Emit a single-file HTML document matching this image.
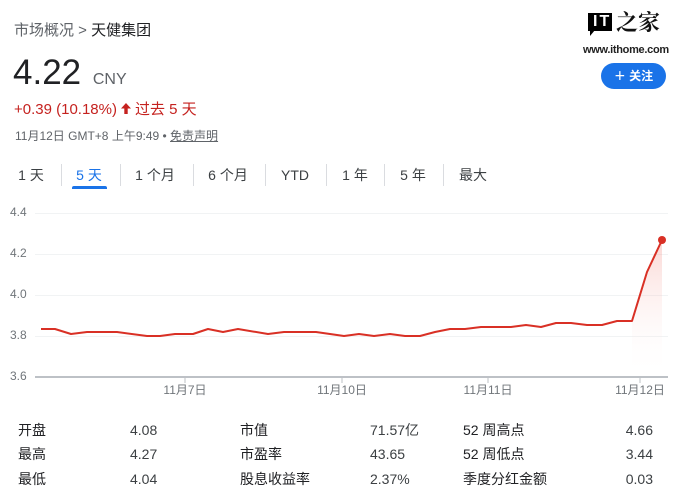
<!DOCTYPE html>
<html><head><meta charset="utf-8"><style>
body{margin:0;width:678px;height:500px;background:#fff;position:relative;overflow:hidden;font-family:"Liberation Sans","Noto Sans CJK SC",sans-serif;color:#202124}
.a{position:absolute;white-space:nowrap}
.tab{position:absolute;top:166px;font-size:14px;line-height:18px;color:#3c4043;transform:translateX(-50%);white-space:nowrap}
.sep{position:absolute;top:164px;width:1px;height:22px;background:#dadce0}
.t{position:absolute;font-size:14px;line-height:18px;color:#202124;white-space:nowrap}
.n{color:#3c4043}
.yl{position:absolute;left:10px;font-size:12px;color:#70757a}
.xl{position:absolute;top:381px;font-size:12px;color:#70757a;transform:translateX(-50%);white-space:nowrap}
</style></head><body>
<div class="a" style="left:14px;top:19px;font-size:15px;color:#5f6368">市场概况 &gt; <span style="color:#202124">天健集团</span></div>
<div class="a" style="left:13px;top:53px;font-size:35px;color:#202124">4.22 <span style="font-size:16px;color:#5f6368;margin-left:2px">CNY</span></div>
<div class="a" style="left:14px;top:98px;font-size:15px;color:#c5221f">+0.39 (10.18%)<svg width="12" height="13" viewBox="0 0 12 13" style="margin:0 3px 0 3px;vertical-align:-1px"><path d="M6 1L1 6.5h3.3V12h3.4V6.5H11z" fill="#c5221f"/></svg>过去 5 天</div>
<div class="a" style="left:15px;top:127px;font-size:12px;color:#5f6368">11月12日 GMT+8 上午9:49 • <span style="text-decoration:underline">免责声明</span></div>
<!-- logo -->
<div class="a" style="left:588px;top:13px;width:24px;height:18px;background:#000"></div>
<div class="a" style="left:590px;top:30px;width:0;height:0;border-left:5px solid #000;border-bottom:6px solid transparent"></div>
<div class="a" style="left:593px;top:13px;font-size:16px;line-height:18px;font-weight:bold;color:#fff;letter-spacing:2px">IT</div>
<div class="a" style="left:616px;top:9px;font-size:22px;line-height:26px;font-weight:bold;font-family:'Noto Serif CJK SC',serif;color:#111">之家</div>
<div class="a" style="left:583px;top:44px;font-size:11px;font-weight:bold;color:#222;letter-spacing:-0.3px">www.ithome.com</div>
<div class="a" style="left:601px;top:63px;width:65px;height:26px;border-radius:13px;background:#1a73e8;color:#fff;font-size:12px;line-height:26px;text-align:center;font-weight:bold">＋ 关注</div>
<!-- tabs -->
<div class="tab" style="left:31px">1 天</div>
<div class="tab" style="left:89px;color:#1a73e8">5 天</div>
<div class="a" style="left:72px;top:186px;width:35px;height:3px;border-radius:2px 2px 0 0;background:#1a73e8"></div>
<div class="tab" style="left:155px">1 个月</div>
<div class="tab" style="left:228px">6 个月</div>
<div class="tab" style="left:295px">YTD</div>
<div class="tab" style="left:355px">1 年</div>
<div class="tab" style="left:413px">5 年</div>
<div class="tab" style="left:473px">最大</div>
<div class="sep" style="left:61px"></div><div class="sep" style="left:120px"></div><div class="sep" style="left:193px"></div><div class="sep" style="left:265px"></div><div class="sep" style="left:326px"></div><div class="sep" style="left:384px"></div><div class="sep" style="left:443px"></div>
<!-- chart -->
<div class="yl" style="top:205px">4.4</div>
<div class="yl" style="top:246px">4.2</div>
<div class="yl" style="top:287px">4.0</div>
<div class="yl" style="top:328px">3.8</div>
<div class="yl" style="top:369px">3.6</div>
<svg class="a" style="left:0;top:0" width="678" height="400">
<defs><linearGradient id="g" x1="0" y1="0" x2="0" y2="1"><stop offset="0" stop-color="#f28b82" stop-opacity=".35"/><stop offset="1" stop-color="#fff" stop-opacity="0"/></linearGradient></defs>
<g stroke="#f1f3f4" stroke-width="1"><line x1="35" y1="213.5" x2="668" y2="213.5"/><line x1="35" y1="254.5" x2="668" y2="254.5"/><line x1="35" y1="295.5" x2="668" y2="295.5"/><line x1="35" y1="336.5" x2="668" y2="336.5"/></g>
<line x1="35" y1="377" x2="668" y2="377" stroke="#bdc1c6" stroke-width="2"/>
<g stroke="#bdc1c6"><line x1="185" y1="377" x2="185" y2="383"/><line x1="342" y1="377" x2="342" y2="383"/><line x1="488" y1="377" x2="488" y2="383"/><line x1="640" y1="377" x2="640" y2="383"/></g>
<path d="M632,321 L647,272 L662,240 L662,377 L632,377Z" fill="url(#g)"/>
<polyline fill="none" stroke="#d93025" stroke-width="2" stroke-linejoin="round" points="41,329 55,329 71,334 87,332 117,332 147,336 160,336 175,334 193,334 208,329 223,332 238,329 268,334 284,332 316,332 344,336 359,334 374,336 390,334 405,336 420,336 435,332 450,329 465,329 481,327 511,327 526,325 541,327 556,323 571,323 587,325 602,325 617,321 632,321 647,272 662,240"/>
<circle cx="662" cy="240" r="4" fill="#d93025"/>
</svg>
<div class="xl" style="left:185px">11月7日</div>
<div class="xl" style="left:342px">11月10日</div>
<div class="xl" style="left:488px">11月11日</div>
<div class="xl" style="left:640px">11月12日</div>
<!-- table -->
<div class="t" style="left:18px;top:421px">开盘</div><div class="t n" style="left:130px;top:421px">4.08</div>
<div class="t" style="left:240px;top:421px">市值</div><div class="t n" style="left:370px;top:421px">71.57亿</div>
<div class="t" style="left:463px;top:421px">52 周高点</div><div class="t n" style="right:25px;top:421px">4.66</div>
<div class="t" style="left:18px;top:445px">最高</div><div class="t n" style="left:130px;top:445px">4.27</div>
<div class="t" style="left:240px;top:445px">市盈率</div><div class="t n" style="left:370px;top:445px">43.65</div>
<div class="t" style="left:463px;top:445px">52 周低点</div><div class="t n" style="right:25px;top:445px">3.44</div>
<div class="t" style="left:18px;top:470px">最低</div><div class="t n" style="left:130px;top:470px">4.04</div>
<div class="t" style="left:240px;top:470px">股息收益率</div><div class="t n" style="left:370px;top:470px">2.37%</div>
<div class="t" style="left:463px;top:470px">季度分红金额</div><div class="t n" style="right:25px;top:470px">0.03</div>
</body></html>
